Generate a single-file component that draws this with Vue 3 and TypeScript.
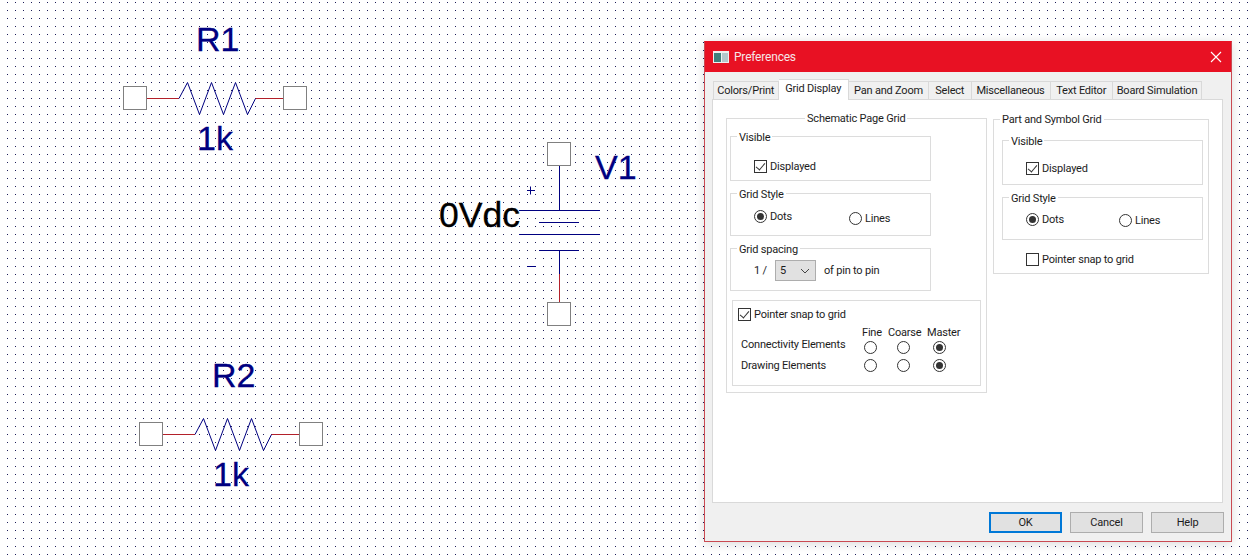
<script setup lang="ts">
const resistors = [
  { name: 'R1', value: '1k', dx: 0, dy: 0 },
  { name: 'R2', value: '1k', dx: 16, dy: 336 }
]

const tabs = [
  { label: 'Colors/Print', width: 65.5 },
  { label: 'Grid Display', width: 70.5, active: true },
  { label: 'Pan and Zoom', width: 80 },
  { label: 'Select', width: 42.5 },
  { label: 'Miscellaneous', width: 79 },
  { label: 'Text Editor', width: 62.5 },
  { label: 'Board Simulation', width: 89 }
]

const snapRows = ['Connectivity Elements', 'Drawing Elements']
const buttons = ['OK', 'Cancel', 'Help']
</script>

<template>
  <main class="page">
    <svg class="schematic" width="1250" height="558" viewBox="0 0 1250 558">
      <defs>
        <pattern id="grid-dots" width="8" height="8" patternUnits="userSpaceOnUse">
          <rect x="7" y="2" width="1" height="1" fill="#1c1c58" />
        </pattern>
      </defs>
      <rect width="1250" height="558" fill="url(#grid-dots)" />

      <!-- Resistors -->
      <g v-for="r in resistors" :key="r.name" :transform="`translate(${r.dx} ${r.dy})`">
        <text x="196" y="50.5" class="ref">{{ r.name }}</text>
        <rect x="123.5" y="86.5" width="23" height="23" class="pin" />
        <rect x="283.5" y="86.5" width="23" height="23" class="pin" />
        <path d="M147 98.5H179M255 98.5H283" class="wire-red" />
        <path d="M179 98.5L187.5 82.5L199.5 114.5L211.5 82.5L223.5 114.5L235.5 82.5L247.5 114.5L255.5 98.5" class="wire-blue" />
        <text x="197" y="150" class="ref">{{ r.value }}</text>
      </g>

      <!-- Voltage source -->
      <rect x="547.5" y="142.5" width="23" height="23" class="pin" />
      <rect x="547.5" y="302.5" width="23" height="23" class="pin" />
      <path d="M559.5 166V210.5M519 210.5H600M539 222.5H579M519 234.5H600M539 250.5H579M559.5 250.5V274" class="wire-blue" />
      <path d="M559.5 274V302" class="wire-red" />
      <path d="M527 190.5H535M530.5 186.5V194.5M527 266.5H536" class="wire-blue" />
      <text x="595" y="179" class="ref">V1</text>
      <text x="439" y="227" class="ref ref--black">0Vdc</text>
    </svg>

    <section class="dialog">
      <header class="dialog__title">
        <svg class="dialog__icon" width="16" height="12" viewBox="0 0 16 12">
          <rect width="16" height="12" fill="#eef0f0" />
          <rect x="1" y="2" width="7" height="9" fill="#3f7f7c" />
          <rect x="9" y="2" width="6" height="9" fill="#b4c6cc" />
        </svg>
        <span class="dialog__name">Preferences</span>
        <svg class="dialog__close" width="12" height="12" viewBox="0 0 12 12">
          <path d="M1 1L11 11M11 1L1 11" stroke="#fff" stroke-width="1.1" fill="none" />
        </svg>
      </header>

      <nav class="tabs">
        <div
          v-for="tab in tabs"
          :key="tab.label"
          class="tab"
          :class="{ 'tab--active': tab.active }"
          :style="{ width: `${tab.width}px` }"
        >{{ tab.label }}</div>
      </nav>

      <div class="panel">
        <div class="group group--schematic">
          <span class="legend legend--center">Schematic Page Grid</span>

          <div class="box box--visible">
            <span class="legend">Visible</span>
            <label class="option"><span class="check" /> Displayed</label>
          </div>

          <div class="box box--style">
            <span class="legend">Grid Style</span>
            <div class="radios">
              <span class="option"><span class="radio radio--on" /> Dots</span>
              <span class="option option--low"><span class="radio" /> Lines</span>
            </div>
          </div>

          <div class="box box--spacing">
            <span class="legend">Grid spacing</span>
            <div class="spacing">
              <span class="spacing__ratio">1 /</span>
              <div class="select">
                <span>5</span>
                <svg width="10" height="6" viewBox="0 0 10 6">
                  <path d="M1 1L5 5L9 1" stroke="#444" fill="none" />
                </svg>
              </div>
              <span>of pin to pin</span>
            </div>
          </div>

          <div class="snap">
            <label class="option"><span class="check" /> Pointer snap to grid</label>
            <div class="snap__grid">
              <span />
              <span class="snap__head">Fine</span>
              <span class="snap__head snap__head--coarse">Coarse</span>
              <span class="snap__head snap__head--master">Master</span>
              <template v-for="(row, i) in snapRows" :key="row">
                <span class="snap__label" :class="{ 'snap__label--first': i === 0 }">{{ row }}</span>
                <span class="radio" />
                <span class="radio" />
                <span class="radio radio--on" />
              </template>
            </div>
          </div>
        </div>

        <div class="group group--symbol">
          <span class="legend legend--symbol">Part and Symbol Grid</span>

          <div class="box box--visible box--tight">
            <span class="legend">Visible</span>
            <label class="option"><span class="check" /> Displayed</label>
          </div>

          <div class="box box--style box--tight">
            <span class="legend">Grid Style</span>
            <div class="radios radios--narrow">
              <span class="option"><span class="radio radio--on" /> Dots</span>
              <span class="option option--nudge"><span class="radio" /> Lines</span>
            </div>
          </div>

          <label class="option option--snap"><span class="check check--off" /> Pointer snap to grid</label>
        </div>
      </div>

      <footer class="dialog__actions">
        <button
          v-for="(label, i) in buttons"
          :key="label"
          class="btn"
          :class="{ 'btn--default': i === 0 }"
          type="button"
        >{{ label }}</button>
      </footer>
    </section>
  </main>
</template>

<style>
html,
body {
  margin: 0;
  background: #fff;
  overflow: hidden;
}
</style>

<style scoped>
.page {
  position: relative;
  width: 1250px;
  height: 558px;
  overflow: hidden;
  background: #fff;
  font-family: Roboto, "Liberation Sans", sans-serif;
  font-size: 11px;
  letter-spacing: -0.2px;
  color: #1c1c1c;
}

.schematic {
  display: block;
}

.ref {
  font-family: "Liberation Sans", sans-serif;
  font-size: 34px;
  letter-spacing: 0;
  fill: #000080;
  stroke: #000080;
  stroke-width: 0.3px;
}

.ref--black {
  font-size: 35.6px;
  fill: #000;
  stroke: #000;
}

.pin {
  fill: #fff;
  stroke: #808080;
}

.wire-red {
  stroke: #b3202a;
  fill: none;
}

.wire-blue {
  stroke: #000080;
  fill: none;
}

/* Dialog window floats over the canvas */
.dialog {
  position: absolute;
  left: 704px;
  top: 41px;
  width: 528px;
  height: 501px;
  box-sizing: border-box;
  display: flex;
  flex-direction: column;
  background: #f0f0f0;
  border: 1px solid #c94a52;
  border-top-color: #e81123;
  box-shadow: 0 2px 10px rgba(0, 0, 0, 0.14);
}

.dialog__title {
  flex: none;
  height: 30px;
  display: flex;
  align-items: center;
  padding: 0 9px 0 8px;
  background: #e81123;
}

.dialog__icon {
  flex: none;
}

.dialog__name {
  margin-left: 5px;
  font-size: 12px;
  color: #f6e6e8;
}

.dialog__close {
  margin-left: auto;
}

.tabs {
  display: flex;
  align-items: flex-end;
  height: 20px;
  margin: 7px 0 0 8px;
}

.tab {
  box-sizing: border-box;
  flex: none;
  height: 18px;
  line-height: 17px;
  text-align: center;
  white-space: nowrap;
  background: #f0f0f0;
  border: 1px solid #d9d9d9;
  border-width: 1px 1px 0 0;
}

.tab:first-child {
  border-left-width: 1px;
}

.tab--active {
  position: relative;
  z-index: 1;
  height: 21px;
  margin-bottom: -1px;
  background: #fff;
}

.panel {
  flex: none;
  height: 404px;
  box-sizing: border-box;
  display: flex;
  align-items: flex-start;
  gap: 6px;
  margin: 0 8px 0 7px;
  padding: 18px 0 0 13px;
  background: #fff;
  border: 1px solid #d9d9d9;
}

.group,
.box,
.snap {
  position: relative;
  box-sizing: border-box;
  border: 1px solid #dcdcdc;
}

.group--schematic {
  width: 261px;
  height: 275px;
  padding: 17px 0 0 3px;
}

.group--symbol {
  width: 216px;
  height: 155px;
  margin-top: 1px;
  padding: 20px 0 0 8px;
}

.legend {
  position: absolute;
  top: -6px;
  left: 6px;
  padding: 0 2px;
  line-height: 14px;
  background: #fff;
  white-space: nowrap;
}

.legend--center {
  top: -7px;
  left: 78px;
}

.legend--symbol {
  top: -7px;
  left: 6px;
}

.box {
  width: 201px;
  margin-bottom: 12px;
}

.box--visible {
  height: 45px;
  padding: 22px 0 0 23px;
}

.box--tight.box--visible {
  padding-top: 20px;
}

.box--style {
  height: 43px;
  padding-top: 15px;
  padding-left: 23px;
}

.box--tight.box--style {
  padding-top: 14px;
}

.box--spacing {
  height: 43px;
  margin-bottom: 9px;
  padding: 11px 0 0 23px;
}

.option {
  display: flex;
  align-items: center;
  gap: 3px;
  height: 14px;
  white-space: nowrap;
}

.option--low {
  margin-top: 2px;
}

.option--nudge {
  margin-top: 1px;
}

.option--snap {
  margin: 12px 0 0 24px;
}

.check {
  position: relative;
  flex: none;
  box-sizing: border-box;
  width: 13px;
  height: 13px;
  border: 1px solid #333;
  background: #fff;
}

.check::after {
  content: "";
  position: absolute;
  left: 3px;
  top: 0;
  width: 4px;
  height: 8px;
  border: solid #333;
  border-width: 0 1px 1px 0;
  transform: rotate(40deg);
}

.check--off::after {
  display: none;
}

.radios {
  display: grid;
  grid-template-columns: 95px auto;
  align-items: start;
}

.radios--narrow {
  grid-template-columns: 93px auto;
}

.radio {
  position: relative;
  flex: none;
  box-sizing: border-box;
  display: block;
  width: 13px;
  height: 13px;
  border: 1px solid #333;
  border-radius: 50%;
  background: #fff;
}

.radio--on::after {
  content: "";
  position: absolute;
  inset: 2px;
  border-radius: 50%;
  background: #333;
}

.spacing {
  display: flex;
  align-items: center;
  height: 21px;
}

.spacing__ratio {
  width: 21px;
}

.select {
  box-sizing: border-box;
  display: flex;
  align-items: center;
  justify-content: space-between;
  width: 41px;
  height: 21px;
  margin-right: 8px;
  padding: 0 5px 0 4px;
  background: #e1e1e1;
  border: 1px solid #adadad;
}

.snap {
  width: 249px;
  height: 86px;
  margin-left: 2px;
  padding: 6px 0 0 5px;
}

.snap__grid {
  display: grid;
  grid-template-columns: 126px 33px 36px 30px;
  grid-template-rows: 12px 18px 18px;
  margin-top: 5px;
  align-items: center;
}

.snap__head {
  margin-left: -2px;
  white-space: nowrap;
}

.snap__head--coarse {
  margin-left: -9px;
}

.snap__head--master {
  margin-left: -6px;
}

.snap__label {
  padding-left: 3px;
  white-space: nowrap;
}

.snap__label--first {
  margin-bottom: 5px;
}

.dialog__actions {
  display: flex;
  justify-content: flex-end;
  gap: 8px;
  margin-top: 9px;
  padding-right: 7px;
}

.btn {
  box-sizing: border-box;
  width: 73px;
  height: 21px;
  padding: 0;
  font: inherit;
  letter-spacing: inherit;
  color: inherit;
  background: #e1e1e1;
  border: 1px solid #adadad;
}

.btn--default {
  border: 2px solid #0078d7;
}
</style>
